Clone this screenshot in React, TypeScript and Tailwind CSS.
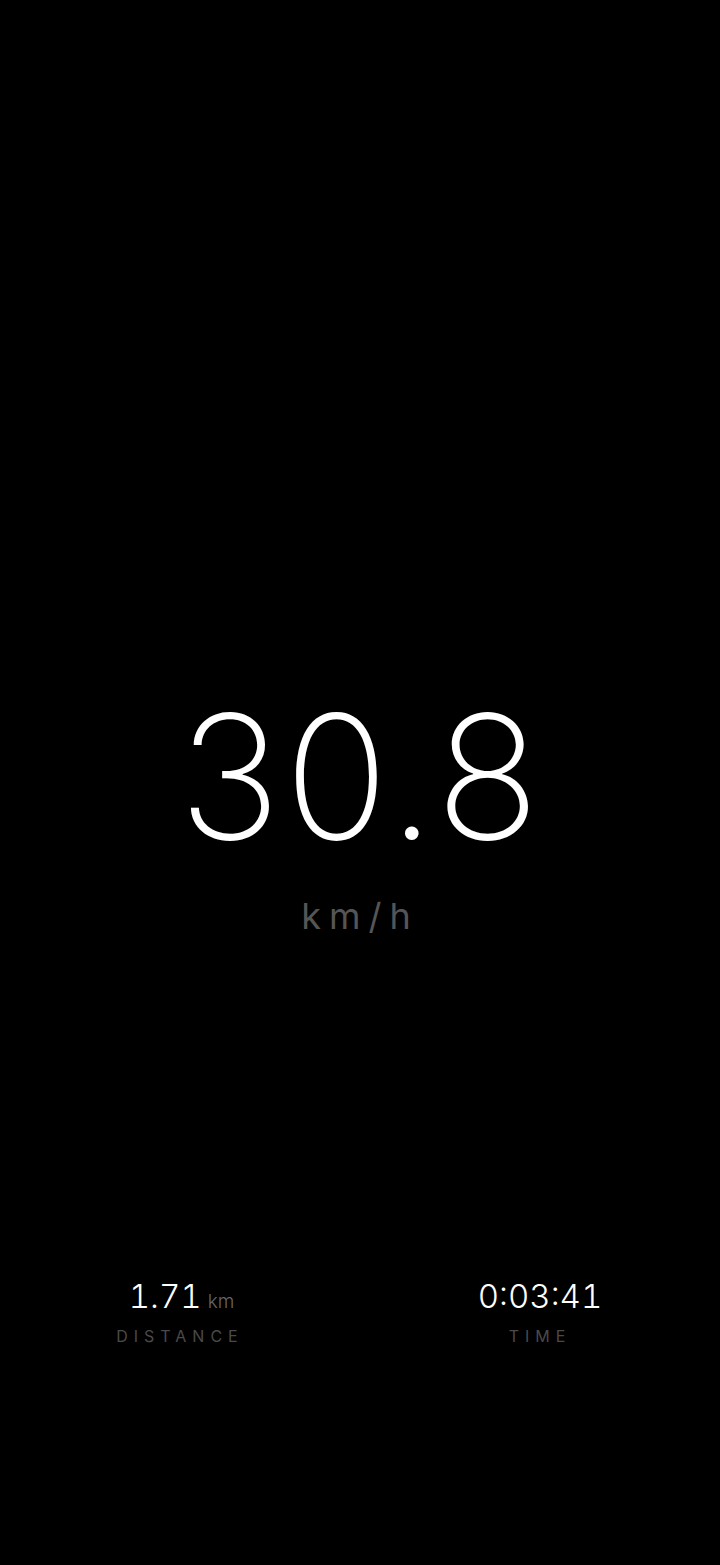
import React from "react";

export default function App() {
  return (
    <div className="h-[1565px] w-full bg-black flex flex-col items-center text-white" style={{ fontFamily: "Inter, 'Liberation Sans', sans-serif" }}>
      <div className="pt-[690px] flex flex-col items-center">
        <div className="text-[172px] leading-none font-extralight tracking-[4px] pl-[2px]">30.8</div>
        <div className="mt-[36px] text-[36px] leading-none font-normal text-[#555555] tracking-[8px]">km/h</div>
      </div>
      <div className="mt-auto mb-[221px] grid grid-cols-2 w-full">
        <div className="flex flex-col items-center">
          <div className="flex items-baseline gap-[6px] pl-[3px]">
            <span className="text-[33px] leading-none font-light tabular-nums">1.71</span>
            <span className="text-[19px] leading-none font-light text-[#666666]">km</span>
          </div>
          <div className="mt-[15px] text-[16px] leading-none font-normal tracking-[6px] text-[#4a4a4a]">DISTANCE</div>
        </div>
        <div className="flex flex-col items-center">
          <div className="text-[33px] leading-none font-light tabular-nums">0:03:41</div>
          <div className="mt-[15px] text-[16px] leading-none font-normal tracking-[6px] text-[#4a4a4a]">TIME</div>
        </div>
      </div>
    </div>
  );
}
